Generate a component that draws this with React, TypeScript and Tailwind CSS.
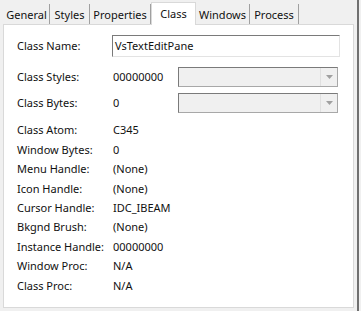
import React from "react";

const rows: [string, string][] = [
  ["Class Atom:", "C345"],
  ["Window Bytes:", "0"],
  ["Menu Handle:", "(None)"],
  ["Icon Handle:", "(None)"],
  ["Cursor Handle:", "IDC_IBEAM"],
  ["Bkgnd Brush:", "(None)"],
  ["Instance Handle:", "00000000"],
  ["Window Proc:", "N/A"],
  ["Class Proc:", "N/A"],
];

const tabs: [string, number][] = [
  ["General", 46],
  ["Styles", 40],
  ["Properties", 61],
  ["Class", 45],
  ["Windows", 54],
  ["Process", 49],
];

function Combo() {
  return (
    <div className="flex h-[20px] w-[160px] border border-[#a8a8a8] border-t-[#7a7a7a] border-l-[#7a7a7a] bg-[#f0f0f0]">
      <div className="flex-1" />
      <div className="flex w-[17px] items-center justify-center border-l border-[#e0e0e0]">
        <svg width="7" height="4" viewBox="0 0 7 4">
          <path d="M0 0h7L3.5 4z" fill="#a0a0a0" />
        </svg>
      </div>
    </div>
  );
}

export default function App() {
  return (
    <div
      className="relative h-[311px] w-[361px] overflow-hidden bg-[#f0f0f0] text-[11px] text-[#111]"
      style={{ fontFamily: '"Segoe UI", "Noto Sans", "Open Sans", sans-serif' }}
    >
      <div className="absolute right-[2px] top-0 bottom-0 w-[2px] bg-[#707070]" />
      <div className="flex h-[24px] items-end pl-[4px]">
        {tabs.map(([t, w]) => {
          const sel = t === "Class";
          return (
            <div
              key={t}
              style={{ width: w }}
              className={
                sel
                  ? "relative z-10 -mb-[1px] flex h-[23px] items-start justify-center border border-b-0 border-[#d9d9d9] bg-white pt-[3px]"
                  : "flex h-[20px] items-start justify-center border-r border-[#a0a0a0] pt-[2px] leading-[17px]"
              }
            >
              {t}
            </div>
          );
        })}
      </div>
      <div className="ml-[3px] mr-[7px] h-[284px] border border-[#d9d9d9] bg-white pl-[13px] pt-[9px]">
        <div className="flex h-[24px] items-center">
          <div className="w-[95px]">Class Name:</div>
          <div className="flex h-[22px] w-[228px] items-center border border-[#7a7a7a] border-b-[#e3e3e3] border-r-[#e3e3e3] px-[2px]">
            VsTextEditPane
          </div>
        </div>
        <div className="mt-[9px] flex h-[20px] items-center">
          <div className="w-[96px]">Class Styles:</div>
          <div className="w-[65px]">00000000</div>
          <Combo />
        </div>
        <div className="mt-[6px] flex h-[20px] items-center">
          <div className="w-[96px]">Class Bytes:</div>
          <div className="w-[65px]">0</div>
          <Combo />
        </div>
        <div className="mt-[8px] flex flex-col">
          {rows.map(([l, v]) => (
            <div key={l} className="flex h-[19.4px] items-center">
              <div className="w-[96px]">{l}</div>
              <div>{v}</div>
            </div>
          ))}
        </div>
      </div>
    </div>
  );
}
